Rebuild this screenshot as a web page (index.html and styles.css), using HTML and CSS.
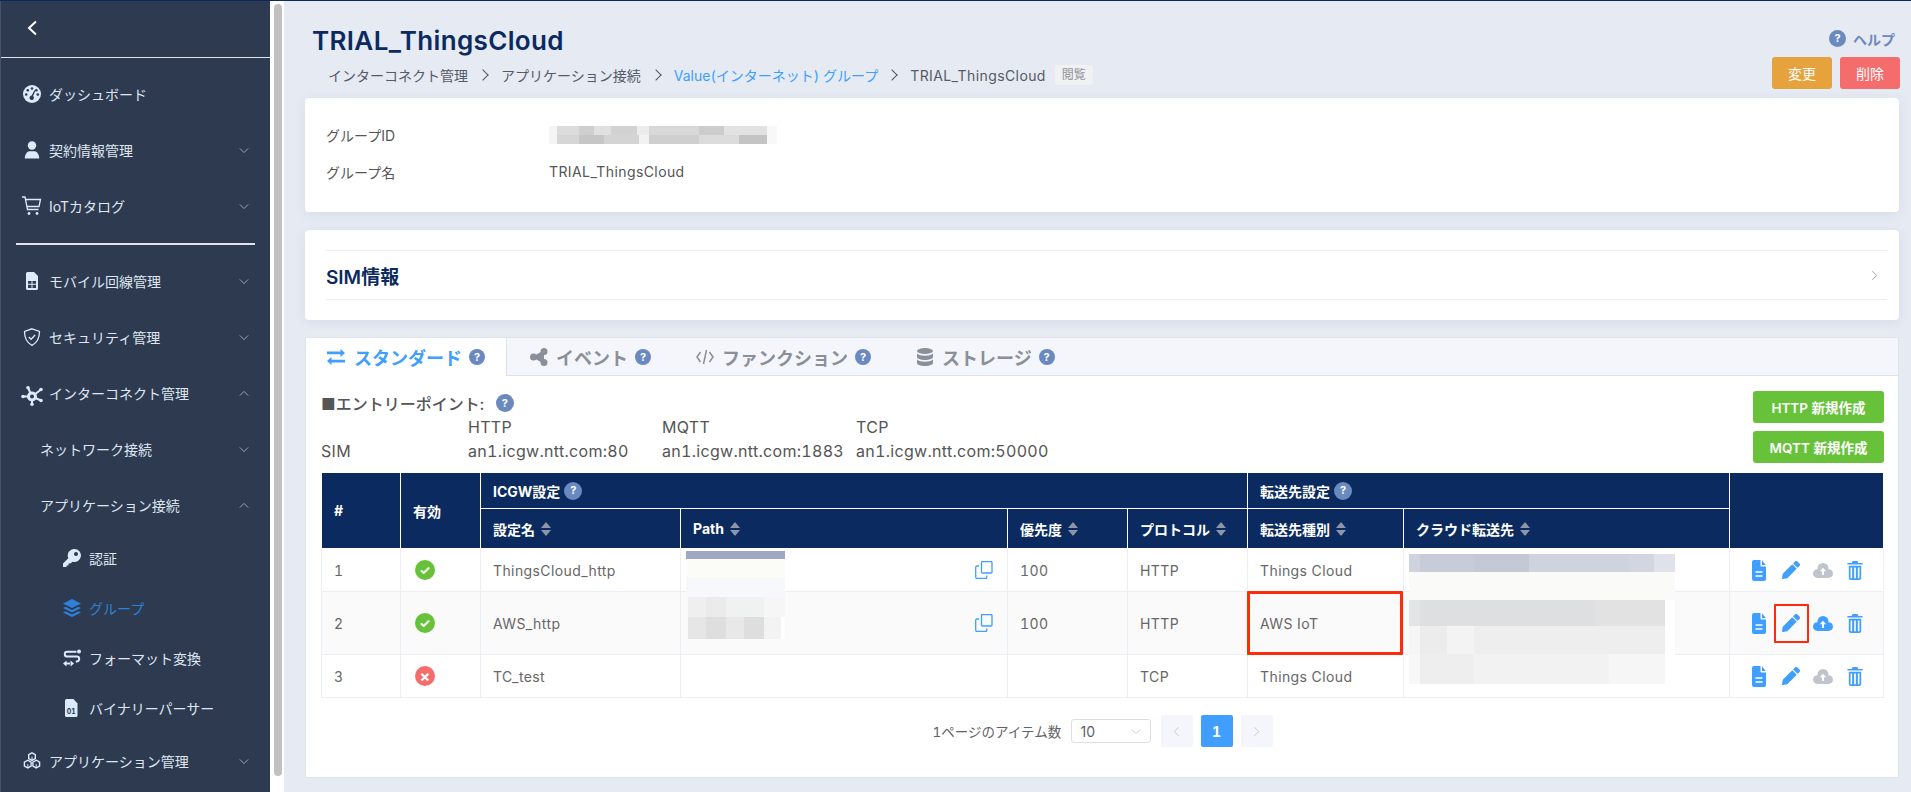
FILE: index.html
```html
<!DOCTYPE html>
<html lang="ja">
<head>
<meta charset="utf-8">
<title>TRIAL_ThingsCloud</title>
<link rel="stylesheet" href="styles.css">
</head>
<body>
<svg class="defs" aria-hidden="true">
  <symbol id="down" viewBox="0 0 12 8"><path d="M1 1.500l5 5 5-5" fill="none" stroke="currentColor" stroke-width="1"/></symbol>
  <symbol id="up" viewBox="0 0 12 8"><path d="M1 6.500l5-5 5 5" fill="none" stroke="currentColor" stroke-width="1"/></symbol>
  <symbol id="doc" viewBox="0 0 14 21"><path fill-rule="evenodd" d="M2 0h6.500v5.500a1 1 0 0 0 1 1H14V19a2 2 0 0 1-2 2H2a2 2 0 0 1-2-2V2a2 2 0 0 1 2-2zM10 .3L13.800 5H10zM3.500 11.200v1.600h7v-1.600zM3.500 15.200v1.600h7v-1.600z"/></symbol>
  <symbol id="pencil" viewBox="0 0 512 512"><path d="M497.900 142.100l-46.100 46.100c-4.700 4.700-12.300 4.700-17 0l-111-111c-4.700-4.700-4.700-12.300 0-17l46.100-46.100c18.700-18.700 49.100-18.700 67.900 0l60.100 60.100c18.800 18.700 18.800 49.100 0 67.900zM284.200 99.800L21.600 362.400.4 483.900c-2.900 16.400 11.400 30.600 27.800 27.800l121.500-21.300 262.600-262.600c4.700-4.700 4.700-12.300 0-17l-111-111c-4.800-4.700-12.400-4.700-17.100 0z"/></symbol>
  <symbol id="cloud" viewBox="0 0 20 15"><circle cx="10" cy="5.500" r="5.500"/><circle cx="4.300" cy="10.500" r="4.300"/><circle cx="15.700" cy="10.500" r="4.300"/><rect x="4" y="9" width="12" height="6"/><path class="cloud-arrow" d="M10 4.800l3.200 3.400h-2.200V12H9V8.200H6.800z"/></symbol>
  <symbol id="trash" viewBox="0 0 16 20"><path fill-rule="evenodd" d="M5.500 0h5l1 2H16v1.600H0V2h4.500zM1.500 5H14.500V18a2 2 0 0 1-2 2H3.500a2 2 0 0 1-2-2zM3.300 6.800V18.200H5V6.800zM7.100 6.800V18.200H8.900V6.800zM11 6.800V18.200H12.700V6.800z"/></symbol>
  <symbol id="copy" viewBox="0 0 18 18"><path d="M6.500 1.500a1 1 0 0 1 1-1h8.500a1 1 0 0 1 1 1v9.500a1 1 0 0 1-1 1H7.500a1 1 0 0 1-1-1z" fill="none" stroke="currentColor" stroke-width="1.300"/><path d="M4 5H2a1.300 1.300 0 0 0-1.300 1.300V16a1.500 1.500 0 0 0 1.500 1.500h8.300a1.300 1.300 0 0 0 1.300-1.300V14.500" fill="none" stroke="currentColor" stroke-width="1.300"/></symbol>
  <symbol id="swap" viewBox="0 0 20 18"><path d="M0 6h15V9l5-4.500L15 0v3H0zM20 12H5V9L0 13.500 5 18v-3h15z"/></symbol>
</svg>

<div class="app">
  <aside class="sidebar">
    <div class="side-top">
      <svg class="back" viewBox="0 0 12 16"><path d="M10 1.500L3 8l7 6.500" fill="none" stroke="currentColor" stroke-width="2"/></svg>
    </div>
    <nav class="nav">
      <a class="item"><svg class="ic" viewBox="0 0 18 18"><circle cx="9" cy="9" r="9" fill="currentColor"/><g fill="#2d3a50"><circle cx="9" cy="3.500" r="1.300"/><circle cx="4.800" cy="5.200" r="1.300"/><circle cx="3.200" cy="9.500" r="1.300"/><circle cx="14.800" cy="9.500" r="1.300"/><circle cx="13.300" cy="5.200" r="1.300"/><path d="M11.400 5.200l1 .5-2.300 5.400a2.200 2.200 0 1 1-1.400-.5z"/></g></svg><span>ダッシュボード</span></a>
      <a class="item"><svg class="ic" viewBox="0 0 18 18"><circle cx="9" cy="4.500" r="4.200" fill="currentColor"/><path d="M1.800 17.500c0-4.500 2.500-7.200 5-7.200h4.400c2.500 0 5 2.700 5 7.200z" fill="currentColor"/></svg><span>契約情報管理</span><svg class="chev"><use href="#down"/></svg></a>
      <a class="item"><svg class="ic ic-cart" viewBox="0 0 20 20"><path d="M0 1h3l2.500 12.500h11M4 3.500h14.500l-1.500 7H5.200" fill="none" stroke="currentColor" stroke-width="1.300"/><circle cx="7" cy="17.500" r="1.400" fill="currentColor"/><circle cx="15" cy="17.500" r="1.400" fill="currentColor"/></svg><span>IoTカタログ</span><svg class="chev"><use href="#down"/></svg></a>
      <div class="divider"></div>
      <a class="item"><svg class="ic" viewBox="0 0 18 18"><path fill-rule="evenodd" d="M4.500 0h6.500l4 4v12.500a1.500 1.500 0 0 1-1.500 1.500h-9A1.500 1.500 0 0 1 3 16.500V1.500A1.500 1.500 0 0 1 4.500 0zM5 9v2.800h3.500V9zM9.500 9v2.800H13V9zM5 12.800V16h3.500v-3.200zM9.500 12.800V16H13v-3.200z" fill="currentColor"/></svg><span>モバイル回線管理</span><svg class="chev"><use href="#down"/></svg></a>
      <a class="item"><svg class="ic" viewBox="0 0 18 18"><path d="M9 .8l7.500 2.700c0 6.500-2 11-7.500 13.800C3.500 14.500 1.500 10 1.500 3.500z" fill="none" stroke="currentColor" stroke-width="1.300"/><path d="M5.800 9l2.300 2.300 4-4.300" fill="none" stroke="currentColor" stroke-width="1.300"/></svg><span>セキュリティ管理</span><svg class="chev"><use href="#down"/></svg></a>
      <a class="item"><svg class="ic ic-net" viewBox="0 0 22 20"><g stroke="currentColor" stroke-width="2"><path d="M11 10.500L7 1.500M11 10.500L20 3.500M11 10.500H2M11 10.500l9 4M11 10.500v8"/></g><g fill="currentColor"><circle cx="11" cy="10.500" r="5"/><circle cx="7" cy="1.800" r="1.800"/><circle cx="20" cy="3.500" r="1.800"/><circle cx="2" cy="10.500" r="1.800"/><circle cx="20" cy="14.500" r="1.800"/><circle cx="11" cy="18.200" r="1.800"/></g><circle cx="11" cy="10.500" r="2" fill="#2d3a50"/></svg><span>インターコネクト管理</span><svg class="chev"><use href="#up"/></svg></a>
      <a class="item level2"><span>ネットワーク接続</span><svg class="chev"><use href="#down"/></svg></a>
      <a class="item level2"><span>アプリケーション接続</span><svg class="chev"><use href="#up"/></svg></a>
      <a class="item level3"><svg class="ic" viewBox="0 0 18 18"><path fill-rule="evenodd" d="M11.500 0a6.500 6.500 0 1 1-2 12.700L7.500 14.500H5.500v2H3.500V18H0v-3.500l5.300-5.300A6.500 6.500 0 0 1 11.500 0zM13 3a2 2 0 1 0 0 4 2 2 0 0 0 0-4z" fill="currentColor"/></svg><span>認証</span></a>
      <a class="item level3 active"><svg class="ic" viewBox="0 0 18 18"><path d="M9 0l9 4.500L9 9 0 4.500z" fill="currentColor"/><path d="M2.500 7.800L0 9l9 4.500L18 9l-2.500-1.200L9 11z" fill="currentColor"/><path d="M2.500 12.300L0 13.500 9 18l9-4.500-2.500-1.200L9 15.500z" fill="currentColor"/></svg><span>グループ</span></a>
      <a class="item level3"><svg class="ic" viewBox="0 0 18 18"><path d="M13.500 2.800H4.200a2.400 2.400 0 0 0 0 4.800h9.600a2.400 2.400 0 0 1 0 4.800h-1" fill="none" stroke="currentColor" stroke-width="2"/><circle cx="16" cy="2.500" r="2" fill="currentColor"/><path d="M0 14.500l3.500-3v2h3.500v2H3.500v2zM11 14.500l-3.500-3v6z" fill="currentColor"/></svg><span>フォーマット変換</span></a>
      <a class="item level3"><svg class="ic" viewBox="0 0 18 18"><path d="M3.500 0h7l4 4.500v12A1.500 1.500 0 0 1 13 18H3.500A1.500 1.500 0 0 1 2 16.500v-15A1.500 1.500 0 0 1 3.500 0z" fill="currentColor"/><text class="bin" x="8.300" y="15">01</text></svg><span>バイナリーパーサー</span></a>
      <a class="item"><svg class="ic" viewBox="0 0 18 18"><g fill="none" stroke="currentColor" stroke-width="1.400"><path d="M9 .8l3.300 1.900v3.800L9 8.400 5.700 6.500V2.700z"/><path d="M4.800 8.200l3.300 1.900v3.900l-3.300 1.900-3.400-1.900v-3.900z"/><path d="M13.200 8.200l3.400 1.900v3.900l-3.400 1.900L9.900 14v-3.900z"/><path d="M9 4.700V8.400M4.800 12.200v3.700M13.200 12.200v3.700" stroke-width="1"/></g></svg><span>アプリケーション管理</span><svg class="chev"><use href="#down"/></svg></a>
    </nav>
  </aside>
  <div class="side-scroll"><div class="side-thumb"></div></div>

  <main class="main">
    <header class="head">
      <div class="head-left">
        <h1 class="title">TRIAL_ThingsCloud</h1>
        <div class="crumbs">
          <span>インターコネクト管理</span><i class="sep"></i>
          <span>アプリケーション接続</span><i class="sep"></i>
          <span class="crumb-link">Value(インターネット) グループ</span><i class="sep"></i>
          <span class="lat">TRIAL_ThingsCloud</span><span class="badge">閲覧</span>
        </div>
      </div>
      <div class="head-right">
        <div class="help"><span class="q q-lg">?</span><span>ヘルプ</span></div>
        <div class="head-btns">
          <button class="btn btn-warn">変更</button>
          <button class="btn btn-danger">削除</button>
        </div>
      </div>
    </header>

    <section class="card info">
      <div class="info-row"><div class="info-label">グループID</div><div class="blur-id"><div class="b1"></div><div class="b2"></div></div></div>
      <div class="info-row"><div class="info-label">グループ名</div><div class="lat">TRIAL_ThingsCloud</div></div>
    </section>

    <section class="card sim">
      <div class="sim-head"><span class="sim-title">SIM情報</span><svg class="sim-chev" viewBox="0 0 8 12"><path d="M1.500 1l5 5-5 5" fill="none" stroke="currentColor" stroke-width="1"/></svg></div>
    </section>

    <section class="card tabs-card">
      <div class="tabs">
        <div class="tab tab-on"><svg class="tab-ic"><use href="#swap"/></svg><span>スタンダード</span><span class="q">?</span></div>
        <div class="tab"><svg class="tab-ic" viewBox="0 0 18 18"><g stroke="currentColor" stroke-width="2"><path d="M14 3.500L4 9l10 5.500"/></g><g fill="currentColor"><circle cx="14" cy="3.500" r="3.500"/><circle cx="3.500" cy="9" r="3.500"/><circle cx="14" cy="14.500" r="3.500"/></g></svg><span>イベント</span><span class="q">?</span></div>
        <div class="tab"><svg class="tab-ic" viewBox="0 0 18 16"><path d="M4.500 3L1 8l3.500 5M13.500 3L17 8l-3.500 5M10.500 1L7.500 15" fill="none" stroke="currentColor" stroke-width="1.500"/></svg><span>ファンクション</span><span class="q">?</span></div>
        <div class="tab"><svg class="tab-ic" viewBox="0 0 18 18"><g fill="currentColor"><ellipse cx="9" cy="3" rx="8" ry="3"/><path d="M1 5.500c1.500 1.500 4.500 2.200 8 2.200s6.500-.7 8-2.200V9c0 1.600-3.500 3-8 3s-8-1.400-8-3z"/><path d="M1 11.500c1.500 1.500 4.500 2.200 8 2.200s6.500-.7 8-2.200V15c0 1.600-3.500 3-8 3s-8-1.400-8-3z"/></g></svg><span>ストレージ</span><span class="q">?</span></div>
      </div>
      <div class="panel">
        <div class="entry">
          <div class="entry-info">
            <div class="entry-title"><span>■エントリーポイント:</span><span class="q">?</span></div>
            <div class="entry-grid">
              <span></span><span>HTTP</span><span>MQTT</span><span>TCP</span>
              <span>SIM</span><span>an1.icgw.ntt.com:80</span><span>an1.icgw.ntt.com:1883</span><span>an1.icgw.ntt.com:50000</span>
            </div>
          </div>
          <div class="entry-btns">
            <button class="btn btn-ok">HTTP 新規作成</button>
            <button class="btn btn-ok">MQTT 新規作成</button>
          </div>
        </div>

        <table class="tbl">
          <colgroup>
            <col class="c1"><col class="c2"><col class="c3"><col class="c4"><col class="c5"><col class="c6"><col class="c7"><col class="c8"><col class="c9">
          </colgroup>
          <thead>
            <tr class="hr1">
              <th rowspan="2">#</th>
              <th rowspan="2">有効</th>
              <th colspan="4"><span class="th-in">ICGW設定<span class="q q-th">?</span></span></th>
              <th colspan="2"><span class="th-in">転送先設定<span class="q q-th">?</span></span></th>
              <th rowspan="2"></th>
            </tr>
            <tr class="hr2">
              <th><span class="th-in">設定名<span class="sort"></span></span></th>
              <th><span class="th-in">Path<span class="sort"></span></span></th>
              <th><span class="th-in">優先度<span class="sort"></span></span></th>
              <th><span class="th-in">プロトコル<span class="sort"></span></span></th>
              <th><span class="th-in">転送先種別<span class="sort"></span></span></th>
              <th><span class="th-in">クラウド転送先<span class="sort"></span></span></th>
            </tr>
          </thead>
          <tbody>
            <tr class="r-s">
              <td>1</td>
              <td><span class="st st-ok">✓</span></td>
              <td>ThingsCloud_http</td>
              <td class="td-path">
                <div class="blur-path"><div class="p1"></div><div class="p2"></div><div class="p3"></div><div class="p4"></div><div class="p5"></div></div>
                <svg class="copy"><use href="#copy"/></svg>
              </td>
              <td>100</td>
              <td>HTTP</td>
              <td>Things Cloud</td>
              <td class="td-cloud">
                <div class="blur-cloud"><div class="k1"></div><div class="k2"></div><div class="k3"></div><div class="k4"></div><div class="k5"></div></div>
              </td>
              <td><div class="acts"><svg class="a a-doc"><use href="#doc"/></svg><svg class="a a-pen"><use href="#pencil"/></svg><svg class="a a-cloud a-off"><use href="#cloud"/></svg><svg class="a a-trash"><use href="#trash"/></svg></div></td>
            </tr>
            <tr class="r-l r-alt">
              <td>2</td>
              <td><span class="st st-ok">✓</span></td>
              <td>AWS_http</td>
              <td class="td-path"><svg class="copy"><use href="#copy"/></svg></td>
              <td>100</td>
              <td>HTTP</td>
              <td class="td-mark">AWS IoT<span class="mark"></span></td>
              <td></td>
              <td><div class="acts"><svg class="a a-doc"><use href="#doc"/></svg><span class="pen-wrap"><svg class="a a-pen"><use href="#pencil"/></svg><span class="mark mark-pen"></span></span><svg class="a a-cloud"><use href="#cloud"/></svg><svg class="a a-trash"><use href="#trash"/></svg></div></td>
            </tr>
            <tr class="r-s">
              <td>3</td>
              <td><span class="st st-no">×</span></td>
              <td>TC_test</td>
              <td></td>
              <td></td>
              <td>TCP</td>
              <td>Things Cloud</td>
              <td></td>
              <td><div class="acts"><svg class="a a-doc"><use href="#doc"/></svg><svg class="a a-pen"><use href="#pencil"/></svg><svg class="a a-cloud a-off"><use href="#cloud"/></svg><svg class="a a-trash"><use href="#trash"/></svg></div></td>
            </tr>
          </tbody>
        </table>

        <div class="pager">
          <span class="pager-label">1ページのアイテム数</span>
          <div class="select"><span>10</span><svg class="select-chev"><use href="#down"/></svg></div>
          <div class="pg pg-off"><svg viewBox="0 0 8 12"><path d="M6.500 1l-5 5 5 5" fill="none" stroke="currentColor"/></svg></div>
          <div class="pg pg-on">1</div>
          <div class="pg pg-off"><svg viewBox="0 0 8 12"><path d="M1.500 1l5 5-5 5" fill="none" stroke="currentColor"/></svg></div>
        </div>
      </div>
    </section>
  </main>
</div>
</body>
</html>
```
FILE: styles.css
```css
* { box-sizing: border-box; }
html, body { margin: 0; height: 100%; overflow: hidden; }
body {
  font-family: "Inter", "Noto Sans CJK JP", "Liberation Sans", sans-serif;
  font-size: 14px;
  color: #606266;
  background: #e6eaf3;
  font-variant-numeric: tabular-nums;
}
.defs { position: absolute; width: 0; height: 0; }
.lat { letter-spacing: .4px; }

.app {
  display: flex;
  width: 1911px;
  height: 792px;
  border-top: 1px solid #0b2b60;
}

/* Sidebar */
.sidebar {
  width: 270px;
  flex: none;
  background: #2d3a50;
  border-left: 1px solid #48536a;
  color: #dfe6f1;
}
.side-top {
  height: 57px;
  border-bottom: 1px solid #dfe5ef;
  padding: 19px 0 0 25px;
}
.back { display: block; width: 12px; height: 16px; color: #fff; }
.nav { padding-top: 8px; }
.item {
  display: flex;
  align-items: center;
  height: 56px;
  padding: 0 21px 0 22px;
  gap: 8px;
  white-space: nowrap;
}
.ic { width: 18px; height: 18px; flex: none; color: #dcebfb; }
.ic-net { width: 22px; height: 20px; margin: 5px -2px 0; }
.ic-cart { width: 20px; height: 20px; margin: 0 -1px; }
.chev { width: 10px; height: 7px; margin-left: auto; color: #aebbd0; flex: none; }
.divider { height: 2px; margin: 9px 15px 8px; background: #dfe5ef; }
.level2 { padding-left: 39px; }
.level3 { height: 50px; padding-left: 62px; }
.active, .active .ic { color: #2f80d8; }
.bin { font-size: 7px; font-weight: 700; fill: #2d3a50; text-anchor: middle; }
.side-scroll {
  width: 14px;
  flex: none;
  background: #fff;
  padding: 3px 2px 0 4px;
}
.side-thumb { height: 772px; border-radius: 4px; background: #c1c1c1; }

/* Main */
.main { flex: 1; min-width: 0; padding: 0 12px 0 21px; }
.head { display: flex; justify-content: space-between; height: 97px; }
.head-left { padding: 22px 0 0 7px; }
.title {
  margin: 0;
  height: 36px;
  font-size: 26px;
  line-height: 36px;
  font-weight: 600;
  letter-spacing: .35px;
  color: #0b2b60;
}
.crumbs {
  display: flex;
  align-items: center;
  height: 22px;
  margin-top: 5px;
  padding-left: 16px;
  color: #555b66;
  white-space: nowrap;
}
.sep {
  width: 8px;
  height: 8px;
  margin: 0 14px 0 11px;
  border-top: 1.500px solid #555;
  border-right: 1.500px solid #555;
  transform: rotate(45deg);
}
.crumb-link { color: #409eff; margin-right: -1px; }
.badge {
  margin-left: 9px;
  padding: 0 7px;
  height: 20px;
  line-height: 20px;
  font-size: 12px;
  color: #909399;
  background: #f0f1f3;
  border-radius: 3px;
}
.head-right { display: flex; flex-direction: column; align-items: flex-end; margin-right: -1px; padding-top: 28px; }
.help {
  display: flex;
  align-items: center;
  gap: 7px;
  height: 19px;
  margin: 0 5px 9px 0;
  color: #6a89bf;
  font-weight: 600;
}
.head-btns { display: flex; gap: 8px; }
.btn {
  display: block;
  border: 0;
  border-radius: 3px;
  color: #fff;
  font: inherit;
  padding: 0;
  height: 32px;
}
.btn-warn { width: 60px; background: #e6a23c; }
.btn-danger { width: 60px; background: #f56c6c; }
.btn-ok { width: 131px; background: #67c23a; font-size: 13.500px; font-weight: 600; }

.q {
  display: inline-flex;
  align-items: center;
  justify-content: center;
  width: 16px;
  height: 16px;
  flex: none;
  border-radius: 50%;
  background: #6a89bf;
  color: #fff;
  font-size: 11px;
  font-weight: 700;
  line-height: 1;
}
.q-lg { width: 17px; height: 17px; }
.q-th { width: 18px; height: 18px; margin-left: 4px; }

/* Cards */
.card {
  background: #fff;
  border-radius: 4px;
  box-shadow: 0 2px 12px rgba(30, 50, 100, .08);
}
.info { height: 114px; padding: 18px 21px; margin-bottom: 18px; }
.info-row { display: flex; align-items: center; height: 37px; color: #555; }
.info-label { width: 223px; }
.blur-id { width: 228px; }
.blur-id div { height: 9px; }
.b1 { background: linear-gradient(90deg, #f4f4f4 0 8px, #dcdcdc 8px 30px, #cfcfcf 30px 45px, #e0e0e0 45px 62px, #d2d2d2 62px 88px, #ececec 88px 100px, #d8d8d8 100px 150px, #cdcdcd 150px 175px, #e2e2e2 175px 218px, #f8f8f8 218px); }
.b2 { background: linear-gradient(90deg, #f4f4f4 0 8px, #d6d6d6 8px 30px, #c6c6c6 30px 55px, #d4d4d4 55px 90px, #f2f2f2 90px 100px, #cfcfcf 100px 150px, #dcdcdc 150px 190px, #c4c4c4 190px 218px, #f8f8f8 218px); }

.sim { height: 90px; padding: 20px 20px 20px 21px; margin-bottom: 17px; }
.sim-head {
  display: flex;
  align-items: center;
  justify-content: space-between;
  height: 50px;
  margin-right: -8px;
  padding-right: 9px;
  border-top: 1px solid #ebeef5;
  border-bottom: 1px solid #ebeef5;
}
.sim-title { font-size: 19px; font-weight: 600; color: #0b2b60; }
.sim-chev { width: 7px; height: 11px; color: #909399; }

.tabs-card { height: 441px; border: 1px solid #dfe3ea; box-shadow: none; border-radius: 0; }
.tabs {
  display: flex;
  height: 38px;
  background: #f4f6fb;
  border-bottom: 1px solid #dfe3ea;
}
.tab {
  display: flex;
  align-items: center;
  gap: 8px;
  height: 38px;
  padding: 0 22px 0 23px;
  color: #8a8f99;
  font-size: 18px;
  font-weight: 600;
  white-space: nowrap;
}
.tab .q { margin-left: -1px; }
.tab-ic { width: 18px; height: 18px; flex: none; fill: currentColor; }
.tab-on {
  width: 201px;
  padding-left: 21px;
  background: #fff;
  color: #409eff;
  border-right: 1px solid #dfe3ea;
}
.tab-on .tab-ic { margin-right: 1px; }

.panel { padding: 15px 14px 0 15px; }
.entry { display: flex; justify-content: space-between; margin-bottom: 9px; }
.entry-title {
  display: flex;
  align-items: center;
  gap: 12px;
  height: 24px;
  font-size: 16px;
  font-weight: 500;
  color: #555;
}
.entry-title .q { width: 18px; height: 18px; }
.entry-grid {
  display: grid;
  grid-template-columns: 147px 194px 194px 194px;
  grid-auto-rows: 24px;
  align-items: center;
  font-size: 16px;
  letter-spacing: .3px;
  color: #555;
}
.entry-btns { display: flex; flex-direction: column; gap: 8px; }

/* Table */
.tbl {
  width: 1562px;
  table-layout: fixed;
  border-collapse: collapse;
}
.c1 { width: 79px; } .c2 { width: 80px; } .c3 { width: 200px; } .c4 { width: 327px; }
.c5 { width: 120px; } .c6 { width: 120px; } .c7 { width: 156px; } .c8 { width: 326px; } .c9 { width: 154px; }
.tbl th {
  background: #0b2b60;
  color: #fff;
  font-weight: 700;
  text-align: left;
  padding: 0 12px;
  border: 1px solid #fff;
  white-space: nowrap;
}
.hr1 { height: 36px; }
.hr2 { height: 40px; }
.th-in { display: inline-flex; align-items: center; }
.sort {
  position: relative;
  display: inline-block;
  width: 10px;
  height: 14px;
  margin-left: 6px;
}
.sort::before, .sort::after {
  content: "";
  position: absolute;
  left: 0;
  border-left: 5px solid transparent;
  border-right: 5px solid transparent;
}
.sort::before { top: 0; border-bottom: 6px solid #8d96a8; }
.sort::after { bottom: 0; border-top: 6px solid #8d96a8; }
.tbl td {
  padding: 0 12px;
  border: 1px solid #ebeef5;
  color: #666;
  background: #fff;
  letter-spacing: .4px;
}
.tbl .r-alt td { background: #fafafa; }
.r-s { height: 43px; }
.r-l { height: 63px; }
.st {
  display: flex;
  align-items: center;
  justify-content: center;
  width: 20px;
  height: 20px;
  margin-left: 2px;
  border-radius: 50%;
  color: #fff;
  font-size: 13px;
  font-weight: 700;
  line-height: 1;
}
.st-ok { background: #67c23a; }
.st-no { background: #f56c6c; font-size: 16px; }
.td-path, .td-cloud { position: relative; text-align: right; }
.copy { display: block; width: 18px; height: 18px; margin: 0 2px 0 auto; color: #409eff; }
.blur-path { position: absolute; left: 5px; top: 2px; width: 99px; z-index: 1; }
.p1 { height: 8px; background: #9ea8c0; }
.p2 { height: 19px; background: #fbfbf8; }
.p3 { height: 19px; background: #f7f8fb; }
.p4 { height: 20px; background: linear-gradient(90deg, #fafafa 0 2px, #efefef 2px 20px, #ebebeb 20px 40px, #f0f1f1 40px 78px, #f6f6f6 78px); }
.p5 { height: 22px; background: linear-gradient(90deg, #fafafa 0 2px, #e6e6e6 2px 20px, #dedede 20px 40px, #e8e8e8 40px 58px, #dedede 58px 78px, #f3f3f3 78px 95px, #fff 95px); }
.blur-cloud { position: absolute; left: 5px; top: 5px; width: 266px; z-index: 1; }
.k1 { height: 18px; background: linear-gradient(90deg, #d0d3de 0 11px, #c8ccd9 11px 65px, #c5c9d6 65px 120px, #cfd3de 120px 220px, #d3d6e0 220px 245px, #dfe2ea 245px); }
.k2 { height: 28px; background: #fafaf8; }
.k3 { height: 26px; background: linear-gradient(90deg, #e4e5e7 0 11px, #dedfe1 11px 185px, #e2e2e2 185px 256px, #fff 256px); }
.k4 { height: 28px; background: linear-gradient(90deg, #f6f6f6 0 11px, #ececec 11px 38px, #f3f3f3 38px 65px, #eeeeee 65px 256px, #fff 256px); }
.k5 { height: 30px; background: linear-gradient(90deg, #f8f8f8 0 11px, #eeeeee 11px 65px, #f2f2f2 65px 200px, #f6f6f6 200px 256px, #fff 256px); }
.td-mark { position: relative; }
.mark { position: absolute; border: 3px solid #ff2a0a; border-radius: 1px; }
.td-mark .mark { left: -1px; right: 0; top: -1px; bottom: -1px; }
.acts { display: flex; justify-content: center; align-items: center; gap: 8px; color: #409eff; }
.a { display: block; width: 24px; height: 21px; fill: #409eff; }
.a-pen { height: 18px; }
.a-cloud { height: 15px; }
.a-trash { height: 19px; }
.a-off { fill: #c0c4cc; }
.cloud-arrow { fill: #fff; }
.pen-wrap { position: relative; display: block; width: 24px; height: 18px; }
.mark-pen { left: -5px; top: -10px; width: 35px; height: 39px; border-width: 2.500px; }

/* Pager */
.pager { display: flex; justify-content: center; align-items: center; margin-top: 17px; height: 32px; }
.pager-label { font-size: 13.500px; width: 138px; color: #606266; }
.select {
  display: flex;
  align-items: center;
  justify-content: space-between;
  width: 80px;
  height: 24px;
  margin-right: 10px;
  padding: 0 9px;
  border: 1px solid #dcdfe6;
  border-radius: 3px;
  font-size: 14px;
  font-variant-numeric: normal;
}
.select-chev { width: 10px; height: 7px; color: #c0c4cc; }
.pg {
  display: flex;
  align-items: center;
  justify-content: center;
  width: 32px;
  height: 32px;
  margin-right: 8px;
  border-radius: 2px;
  font-weight: 700;
}
.pg:last-child { margin-right: 0; }
.pg svg { width: 7px; height: 11px; }
.pg-off { background: #f4f6fb; color: #c0c4cc; }
.pg-on { background: #409eff; color: #fff; }
```
